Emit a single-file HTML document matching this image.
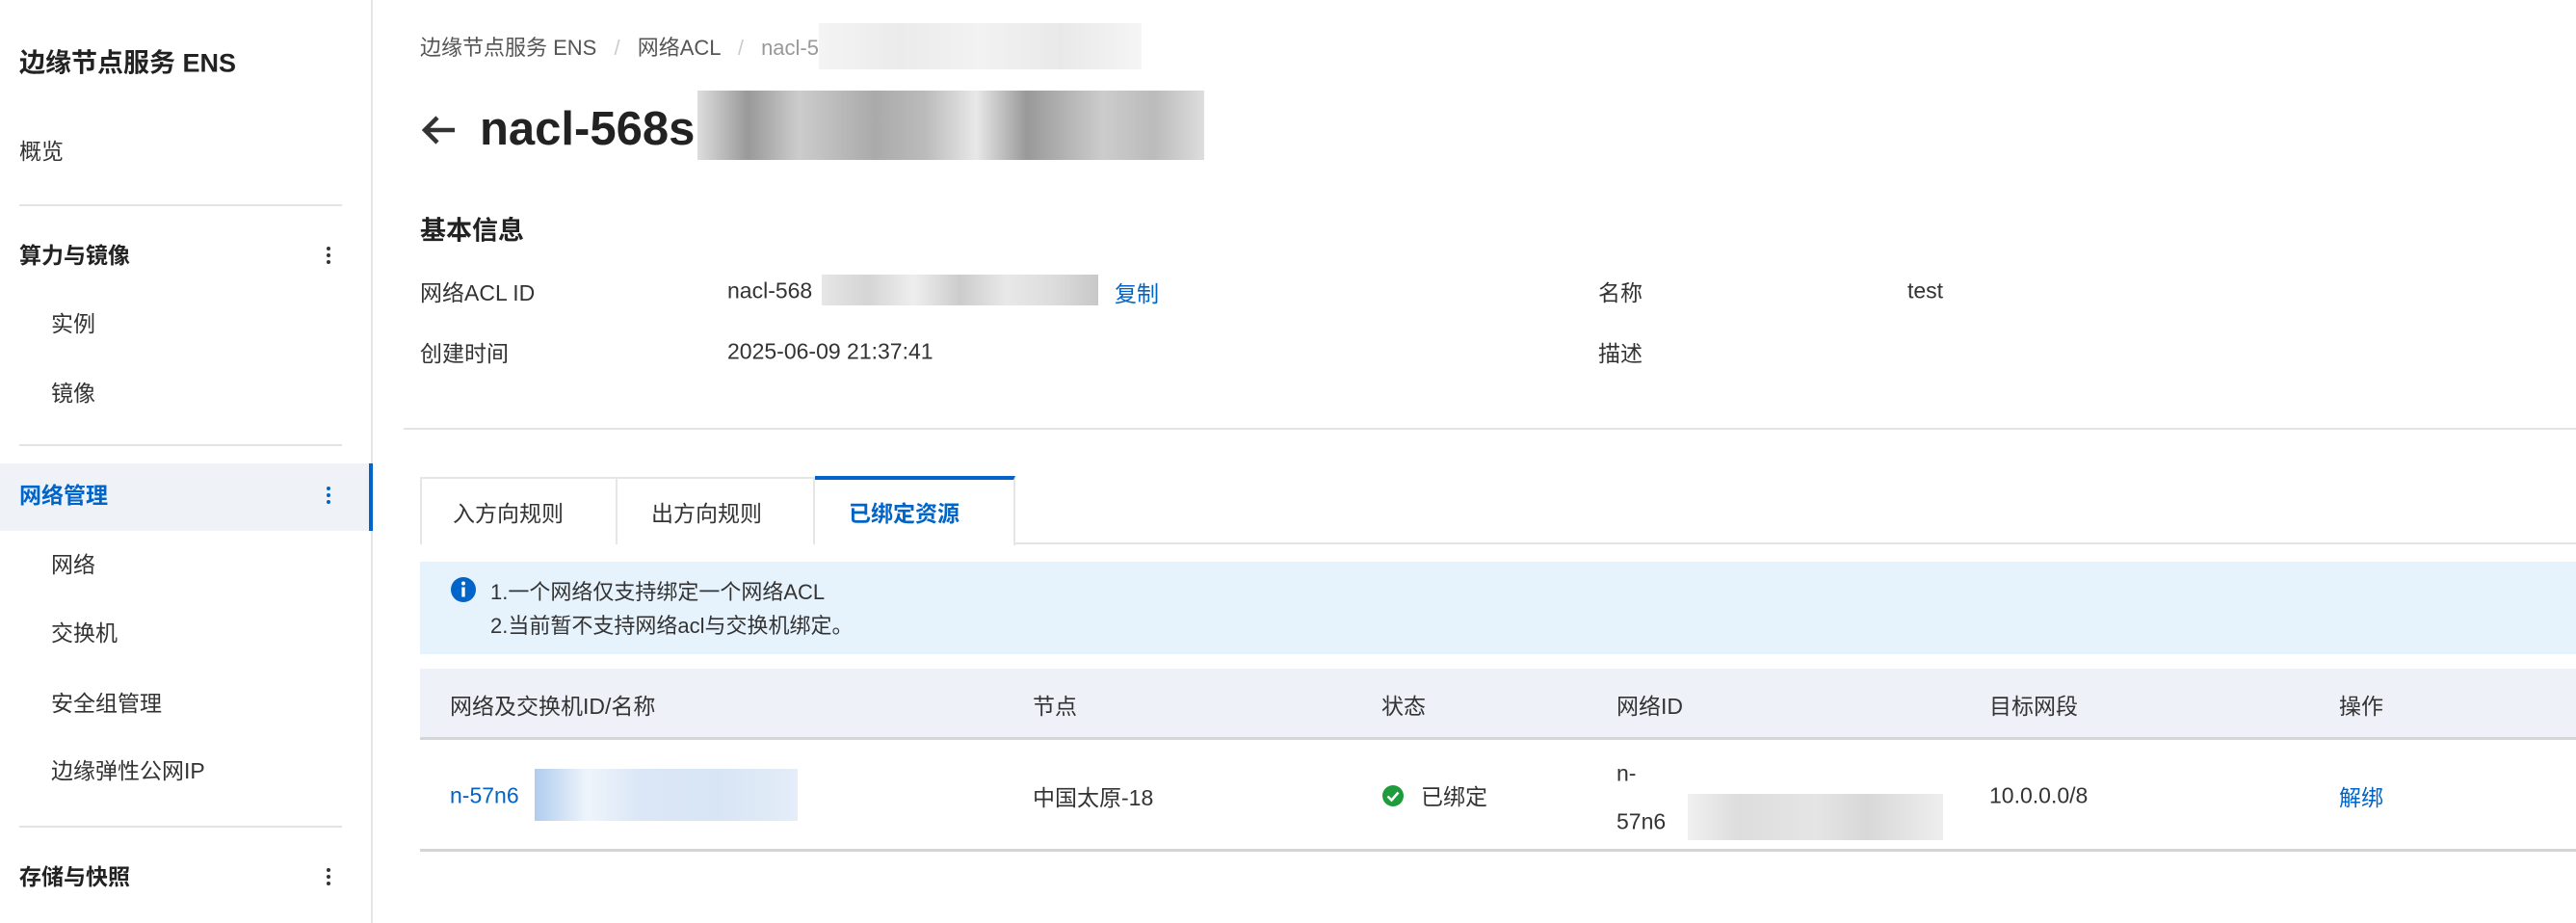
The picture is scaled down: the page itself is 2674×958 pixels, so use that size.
<!DOCTYPE html>
<html><head><meta charset="utf-8"><style>
*{margin:0;padding:0;box-sizing:border-box}
body{width:2674px;height:958px;background:#fff;font-family:"Liberation Sans","Noto Sans CJK SC",sans-serif;color:#333;position:relative;overflow:hidden;font-size:23px}
.a{position:absolute;white-space:nowrap}
.side{position:absolute;left:0;top:0;width:387px;height:958px;border-right:2px solid #e5e5e5}
.dv{position:absolute;left:20px;width:335px;height:2px;background:#e3e3e3}
.dots{position:absolute;left:339px;width:4px}
.dots i{display:block;width:4px;height:4px;border-radius:2px;background:#333;margin-bottom:3px}
.c{transform:translateY(-50%)}
.blk{position:absolute}
</style></head><body>
<div class="side">
<div class="a c" style="left:20px;top:63px;font-size:27px;font-weight:bold;color:#222">边缘节点服务 ENS</div>
<div class="a c" style="left:20px;top:155px;color:#333">概览</div>
<div class="dv" style="top:212px"></div>
<div class="a c" style="left:20px;top:263px;font-weight:bold;color:#222">算力与镜像</div>
<div class="dots" style="top:256px"><i></i><i></i><i></i></div>
<div class="a c" style="left:53px;top:334px">实例</div>
<div class="a c" style="left:53px;top:406px">镜像</div>
<div class="dv" style="top:461px"></div>
<div style="position:absolute;left:0;top:481px;width:387px;height:70px;background:#eff3f8;border-right:4px solid #0064c8"></div>
<div class="a c" style="left:20px;top:512px;font-weight:bold;color:#0064c8">网络管理</div>
<div class="dots" style="top:505px"><i style="background:#0064c8"></i><i style="background:#0064c8"></i><i style="background:#0064c8"></i></div>
<div class="a c" style="left:53px;top:584px">网络</div>
<div class="a c" style="left:53px;top:655px">交换机</div>
<div class="a c" style="left:53px;top:728px">安全组管理</div>
<div class="a c" style="left:53px;top:798px">边缘弹性公网IP</div>
<div class="dv" style="top:857px"></div>
<div class="a c" style="left:20px;top:908px;font-weight:bold;color:#222">存储与快照</div>
<div class="dots" style="top:901px"><i></i><i></i><i></i></div>
</div>

<div class="a c" style="left:436px;top:48px;font-size:22px;color:#555">边缘节点服务 ENS <span style="color:#ccc;margin:0 12px">/</span> 网络ACL <span style="color:#ccc;margin:0 12px">/</span> <span style="color:#999">nacl-56</span></div>
<div class="blk" style="left:850px;top:24px;width:335px;height:48px;background:linear-gradient(90deg,#f4f4f4,#ebebeb,#f2f2f2,#e9e9e9,#f5f5f5)"></div>

<svg class="a" style="left:436px;top:114px" width="40" height="40" viewBox="0 0 40 40"><path d="M36 21H6M18 8L5 21l13 13" stroke="#333" stroke-width="4.5" fill="none"/></svg>
<div class="a c" style="left:498px;top:134px;font-size:49px;font-weight:bold;color:#222">nacl-568s</div>
<div class="blk" style="left:724px;top:94px;width:526px;height:72px;background:linear-gradient(90deg,#ddd,#999 10%,#ccc 20%,#aaa 35%,#bbb 45%,#e8e8e8 55%,#999 65%,#ccc 80%,#bbb 90%,#ddd)"></div>

<div class="a c" style="left:436px;top:237px;font-size:27px;font-weight:bold;color:#222">基本信息</div>
<div class="a c" style="left:436px;top:302px">网络ACL ID</div>
<div class="a c" style="left:755px;top:302px">nacl-568</div>
<div class="blk" style="left:853px;top:285px;width:287px;height:32px;background:linear-gradient(90deg,#e6e6e6,#d5d5d5,#eee,#ccc,#e8e8e8,#ddd,#c8c8c8)"></div>
<div class="a c" style="left:1157px;top:303px;color:#0064c8">复制</div>
<div class="a c" style="left:1659px;top:302px">名称</div>
<div class="a c" style="left:1980px;top:302px">test</div>
<div class="a c" style="left:436px;top:365px">创建时间</div>
<div class="a c" style="left:755px;top:365px">2025-06-09 21:37:41</div>
<div class="a c" style="left:1659px;top:365px">描述</div>
<div class="blk" style="left:419px;top:444px;width:2255px;height:2px;background:#e3e3e3"></div>

<div class="blk" style="left:436px;top:563px;width:2238px;height:2px;background:#e3e3e3"></div>
<div class="blk" style="left:436px;top:495px;width:205px;height:70px;border:2px solid #e6e6e6;border-bottom:none;background:#fff"></div>
<div class="blk" style="left:641px;top:495px;width:205px;height:70px;border:2px solid #e6e6e6;border-left:none;border-bottom:none;background:#fff"></div>
<div class="blk" style="left:846px;top:494px;width:208px;height:72px;border-top:4px solid #0064c8;border-right:2px solid #e6e6e6;background:#fff"></div>
<div class="a c" style="left:470px;top:531px">入方向规则</div>
<div class="a c" style="left:676px;top:531px">出方向规则</div>
<div class="a c" style="left:881px;top:531px;color:#0064c8;font-weight:bold">已绑定资源</div>

<div class="blk" style="left:436px;top:583px;width:2238px;height:96px;background:#e6f3fd"></div>
<svg class="a" style="left:467px;top:598px" width="28" height="28" viewBox="0 0 28 28"><circle cx="14" cy="14" r="13" fill="#0064c8"/><rect x="12.3" y="11.5" width="3.4" height="10" fill="#fff"/><circle cx="14" cy="7.5" r="2" fill="#fff"/></svg>
<div class="a c" style="left:509px;top:613px;font-size:22px">1.一个网络仅支持绑定一个网络ACL</div>
<div class="a c" style="left:509px;top:648px;font-size:22px">2.当前暂不支持网络acl与交换机绑定。</div>

<div class="blk" style="left:436px;top:694px;width:2238px;height:74px;background:#eef1f7;border-bottom:3px solid #d5d5d5"></div>
<div class="a c" style="left:467px;top:731px">网络及交换机ID/名称</div>
<div class="a c" style="left:1072px;top:731px">节点</div>
<div class="a c" style="left:1434px;top:731px">状态</div>
<div class="a c" style="left:1678px;top:731px">网络ID</div>
<div class="a c" style="left:2065px;top:731px">目标网段</div>
<div class="a c" style="left:2428px;top:731px">操作</div>

<div class="a c" style="left:467px;top:826px;color:#0064c8">n-57n6</div>
<div class="blk" style="left:555px;top:798px;width:273px;height:54px;background:linear-gradient(90deg,#b0ccee,#eef4fb 20%,#dbe7f6 40%,#d8e5f5 70%,#e4edf8)"></div>
<div class="a c" style="left:1072px;top:826px">中国太原-18</div>
<svg class="a" style="left:1434px;top:814px" width="24" height="24" viewBox="0 0 24 24"><circle cx="12" cy="12" r="11" fill="#1e9c3c"/><path d="M6.5 12.5l4 4 7-8" stroke="#fff" stroke-width="2.5" fill="none"/></svg>
<div class="a c" style="left:1475px;top:825px">已绑定</div>
<div class="a c" style="left:1678px;top:803px">n-</div>
<div class="a c" style="left:1678px;top:853px">57n6</div>
<div class="blk" style="left:1752px;top:824px;width:265px;height:48px;background:linear-gradient(90deg,#f0f0f0,#ddd 20%,#e5e5e5 50%,#d8d8d8 70%,#eee)"></div>
<div class="a c" style="left:2065px;top:826px">10.0.0.0/8</div>
<div class="a c" style="left:2428px;top:826px;color:#0064c8">解绑</div>
<div class="blk" style="left:436px;top:881px;width:2238px;height:3px;background:#d5d5d5"></div>
</body></html>
